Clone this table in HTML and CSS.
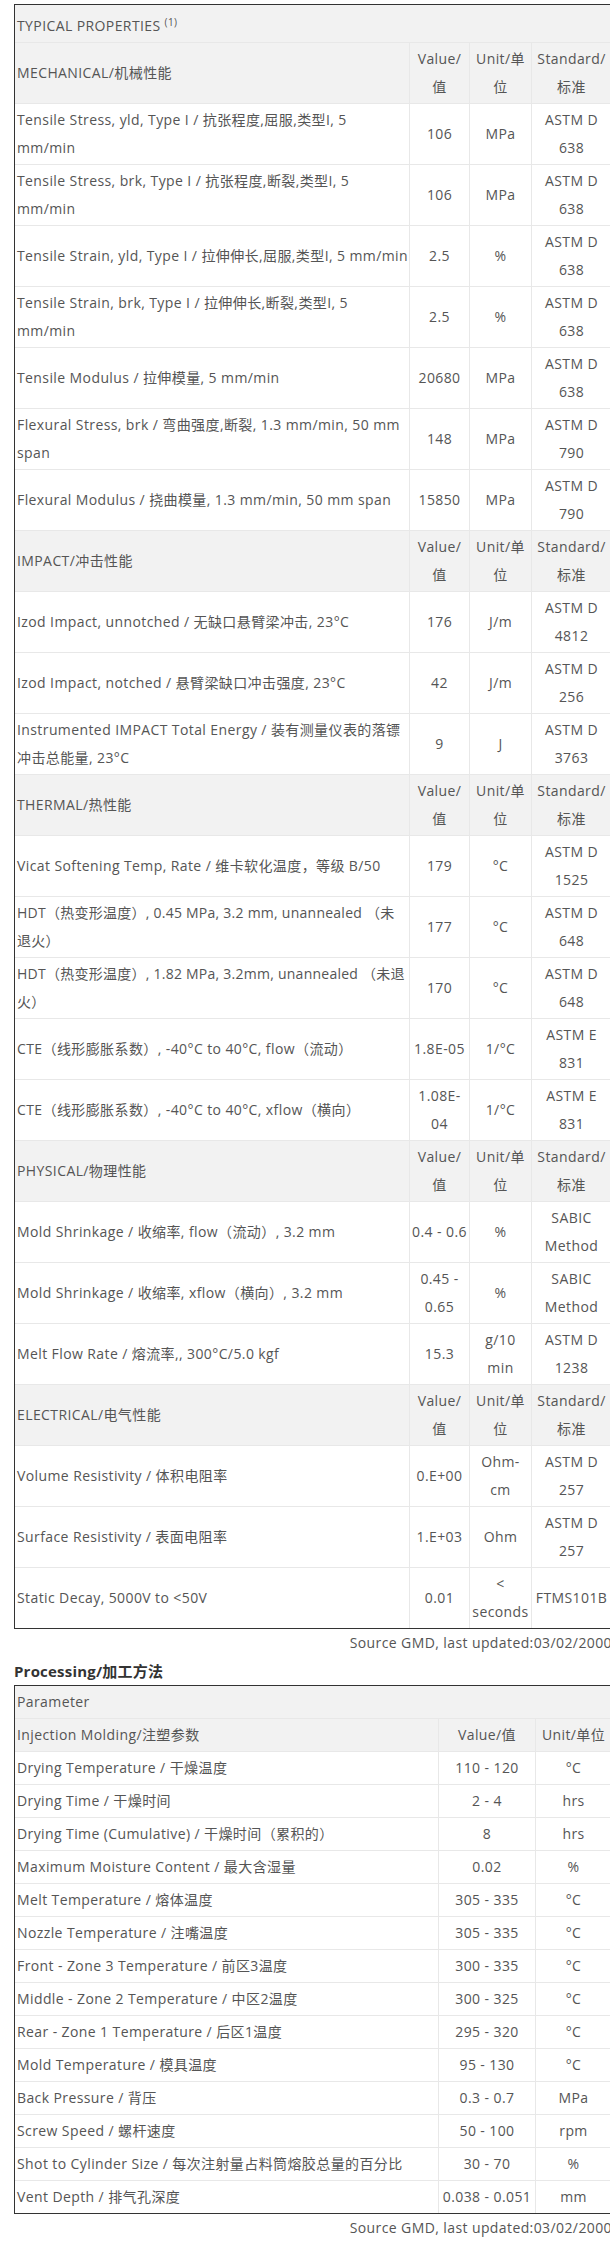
FILE: index.html
```html
<!DOCTYPE html>
<html lang="zh">
<head>
<meta charset="utf-8">
<title>Typical Properties</title>
<link rel="stylesheet" href="styles.css">
</head>
<body>
<div class="page">
  <table class="props">
    <colgroup>
      <col class="c-name"><col class="c-val"><col class="c-unit"><col class="c-std">
    </colgroup>
    <tr class="head top"><td colspan="4" class="typical">TYPICAL PROPERTIES <sup>(1)</sup></td></tr>

    <tr class="head"><td>MECHANICAL/机械性能</td><td class="ctr">Value/<br>值</td><td class="ctr">Unit/单<br>位</td><td class="ctr">Standard/<br>标准</td></tr>
    <tr><td>Tensile Stress, yld, Type I / 抗张程度,屈服,类型I, 5<br>mm/min</td><td class="ctr">106</td><td class="ctr">MPa</td><td class="ctr">ASTM D<br>638</td></tr>
    <tr><td>Tensile Stress, brk, Type I / 抗张程度,断裂,类型I, 5<br>mm/min</td><td class="ctr">106</td><td class="ctr">MPa</td><td class="ctr">ASTM D<br>638</td></tr>
    <tr><td class="nw">Tensile Strain, yld, Type I / 拉伸伸长,屈服,类型I, 5 mm/min</td><td class="ctr">2.5</td><td class="ctr">%</td><td class="ctr">ASTM D<br>638</td></tr>
    <tr><td>Tensile Strain, brk, Type I / 拉伸伸长,断裂,类型I, 5<br>mm/min</td><td class="ctr">2.5</td><td class="ctr">%</td><td class="ctr">ASTM D<br>638</td></tr>
    <tr><td>Tensile Modulus / 拉伸模量, 5 mm/min</td><td class="ctr">20680</td><td class="ctr">MPa</td><td class="ctr">ASTM D<br>638</td></tr>
    <tr><td>Flexural Stress, brk / 弯曲强度,断裂, 1.3 mm/min, 50 mm<br>span</td><td class="ctr">148</td><td class="ctr">MPa</td><td class="ctr">ASTM D<br>790</td></tr>
    <tr><td>Flexural Modulus / 挠曲模量, 1.3 mm/min, 50 mm span</td><td class="ctr">15850</td><td class="ctr">MPa</td><td class="ctr">ASTM D<br>790</td></tr>

    <tr class="head"><td>IMPACT/冲击性能</td><td class="ctr">Value/<br>值</td><td class="ctr">Unit/单<br>位</td><td class="ctr">Standard/<br>标准</td></tr>
    <tr><td>Izod Impact, unnotched / 无缺口悬臂梁冲击, 23°C</td><td class="ctr">176</td><td class="ctr">J/m</td><td class="ctr">ASTM D<br>4812</td></tr>
    <tr><td>Izod Impact, notched / 悬臂梁缺口冲击强度, 23°C</td><td class="ctr">42</td><td class="ctr">J/m</td><td class="ctr">ASTM D<br>256</td></tr>
    <tr><td>Instrumented IMPACT Total Energy / 装有测量仪表的落镖<br>冲击总能量, 23°C</td><td class="ctr">9</td><td class="ctr">J</td><td class="ctr">ASTM D<br>3763</td></tr>

    <tr class="head"><td>THERMAL/热性能</td><td class="ctr">Value/<br>值</td><td class="ctr">Unit/单<br>位</td><td class="ctr">Standard/<br>标准</td></tr>
    <tr><td>Vicat Softening Temp, Rate / 维卡软化温度，等级 B/50</td><td class="ctr">179</td><td class="ctr">°C</td><td class="ctr">ASTM D<br>1525</td></tr>
    <tr><td class="nw tight">HDT（热变形温度）, 0.45 MPa, 3.2 mm, unannealed （未<br>退火）</td><td class="ctr">177</td><td class="ctr">°C</td><td class="ctr">ASTM D<br>648</td></tr>
    <tr><td class="nw tight">HDT（热变形温度）, 1.82 MPa, 3.2mm, unannealed （未退<br>火）</td><td class="ctr">170</td><td class="ctr">°C</td><td class="ctr">ASTM D<br>648</td></tr>
    <tr><td>CTE（线形膨胀系数）, -40°C to 40°C, flow（流动）</td><td class="ctr">1.8E-05</td><td class="ctr">1/°C</td><td class="ctr">ASTM E<br>831</td></tr>
    <tr><td>CTE（线形膨胀系数）, -40°C to 40°C, xflow（横向）</td><td class="ctr">1.08E-<br>04</td><td class="ctr">1/°C</td><td class="ctr">ASTM E<br>831</td></tr>

    <tr class="head"><td>PHYSICAL/物理性能</td><td class="ctr">Value/<br>值</td><td class="ctr">Unit/单<br>位</td><td class="ctr">Standard/<br>标准</td></tr>
    <tr><td>Mold Shrinkage / 收缩率, flow（流动）, 3.2 mm</td><td class="ctr nw">0.4 - 0.6</td><td class="ctr">%</td><td class="ctr">SABIC<br>Method</td></tr>
    <tr><td>Mold Shrinkage / 收缩率, xflow（横向）, 3.2 mm</td><td class="ctr">0.45 -<br>0.65</td><td class="ctr">%</td><td class="ctr">SABIC<br>Method</td></tr>
    <tr><td>Melt Flow Rate / 熔流率,, 300°C/5.0 kgf</td><td class="ctr">15.3</td><td class="ctr">g/10<br>min</td><td class="ctr">ASTM D<br>1238</td></tr>

    <tr class="head"><td>ELECTRICAL/电气性能</td><td class="ctr">Value/<br>值</td><td class="ctr">Unit/单<br>位</td><td class="ctr">Standard/<br>标准</td></tr>
    <tr><td>Volume Resistivity / 体积电阻率</td><td class="ctr">0.E+00</td><td class="ctr">Ohm-<br>cm</td><td class="ctr">ASTM D<br>257</td></tr>
    <tr><td>Surface Resistivity / 表面电阻率</td><td class="ctr">1.E+03</td><td class="ctr">Ohm</td><td class="ctr">ASTM D<br>257</td></tr>
    <tr><td>Static Decay, 5000V to &lt;50V</td><td class="ctr">0.01</td><td class="ctr">&lt;<br>seconds</td><td class="ctr nw">FTMS101B</td></tr>
  </table>
  <p class="source">Source GMD, last updated:03/02/2000</p>

  <h3 class="title">Processing/加工方法</h3>
  <table class="proc">
    <colgroup>
      <col class="p-name"><col class="p-val"><col class="p-unit">
    </colgroup>
    <tr class="head top"><td colspan="3">Parameter</td></tr>
    <tr class="head"><td>Injection Molding/注塑参数</td><td class="ctr">Value/值</td><td class="ctr nw">Unit/单位</td></tr>
    <tr><td>Drying Temperature / 干燥温度</td><td class="ctr">110 - 120</td><td class="ctr">°C</td></tr>
    <tr><td>Drying Time / 干燥时间</td><td class="ctr">2 - 4</td><td class="ctr">hrs</td></tr>
    <tr><td>Drying Time (Cumulative) / 干燥时间（累积的）</td><td class="ctr">8</td><td class="ctr">hrs</td></tr>
    <tr><td>Maximum Moisture Content / 最大含湿量</td><td class="ctr">0.02</td><td class="ctr">%</td></tr>
    <tr><td>Melt Temperature / 熔体温度</td><td class="ctr">305 - 335</td><td class="ctr">°C</td></tr>
    <tr><td>Nozzle Temperature / 注嘴温度</td><td class="ctr">305 - 335</td><td class="ctr">°C</td></tr>
    <tr><td>Front - Zone 3 Temperature / 前区3温度</td><td class="ctr">300 - 335</td><td class="ctr">°C</td></tr>
    <tr><td>Middle - Zone 2 Temperature / 中区2温度</td><td class="ctr">300 - 325</td><td class="ctr">°C</td></tr>
    <tr><td>Rear - Zone 1 Temperature / 后区1温度</td><td class="ctr">295 - 320</td><td class="ctr">°C</td></tr>
    <tr><td>Mold Temperature / 模具温度</td><td class="ctr">95 - 130</td><td class="ctr">°C</td></tr>
    <tr><td>Back Pressure / 背压</td><td class="ctr">0.3 - 0.7</td><td class="ctr">MPa</td></tr>
    <tr><td>Screw Speed / 螺杆速度</td><td class="ctr">50 - 100</td><td class="ctr">rpm</td></tr>
    <tr><td>Shot to Cylinder Size / 每次注射量占料筒熔胶总量的百分比</td><td class="ctr">30 - 70</td><td class="ctr">%</td></tr>
    <tr><td>Vent Depth / 排气孔深度</td><td class="ctr nw">0.038 - 0.051</td><td class="ctr">mm</td></tr>
  </table>
  <p class="source">Source GMD, last updated:03/02/2000</p>
</div>
</body>
</html>
```

FILE: styles.css
```css
html {
  overflow: hidden;
  background: #fff;
}
body {
  margin: 0;
  font-family: "Open Sans", "Noto Sans CJK SC", sans-serif;
  font-size: 14px;
  line-height: 28px;
  letter-spacing: 0.4px;
  color: #555;
}
.page {
  width: 598px;
  padding: 4px 0 0 14px;
}
table {
  width: 598px;
  table-layout: fixed;
  border-collapse: separate;
  border-spacing: 0;
  border: 1px solid #333;
}
td {
  padding: 2px 2px;
  vertical-align: middle;
  text-align: left;
  border-top: 1px solid #e8e8e8;
  border-right: 1px solid #e8e8e8;
  overflow: visible;
}
td:last-child {
  border-right: 0;
}
tr.top td {
  border-top: 0;
}
tr.head td {
  background: #f2f2f2;
}
td.ctr {
  text-align: center;
}
td.nw {
  white-space: nowrap;
}
td.tight {
  letter-spacing: 0.25px;
}
td.typical {
  padding-top: 7px;
}
sup {
  font-size: 10px;
  line-height: 0;
  vertical-align: 5px;
}
.c-name { width: 395px; }
.c-val { width: 60px; }
.c-unit { width: 62px; }
.c-std { width: 79px; }
.p-name { width: 424px; }
.p-val { width: 97px; }
.p-unit { width: 75px; }
.source {
  margin: 0;
  text-align: right;
  line-height: 28px;
}
.title {
  margin: 0;
  font-size: 15px;
  font-weight: 700;
  line-height: 28px;
  letter-spacing: 0.2px;
  color: #333;
}
```
